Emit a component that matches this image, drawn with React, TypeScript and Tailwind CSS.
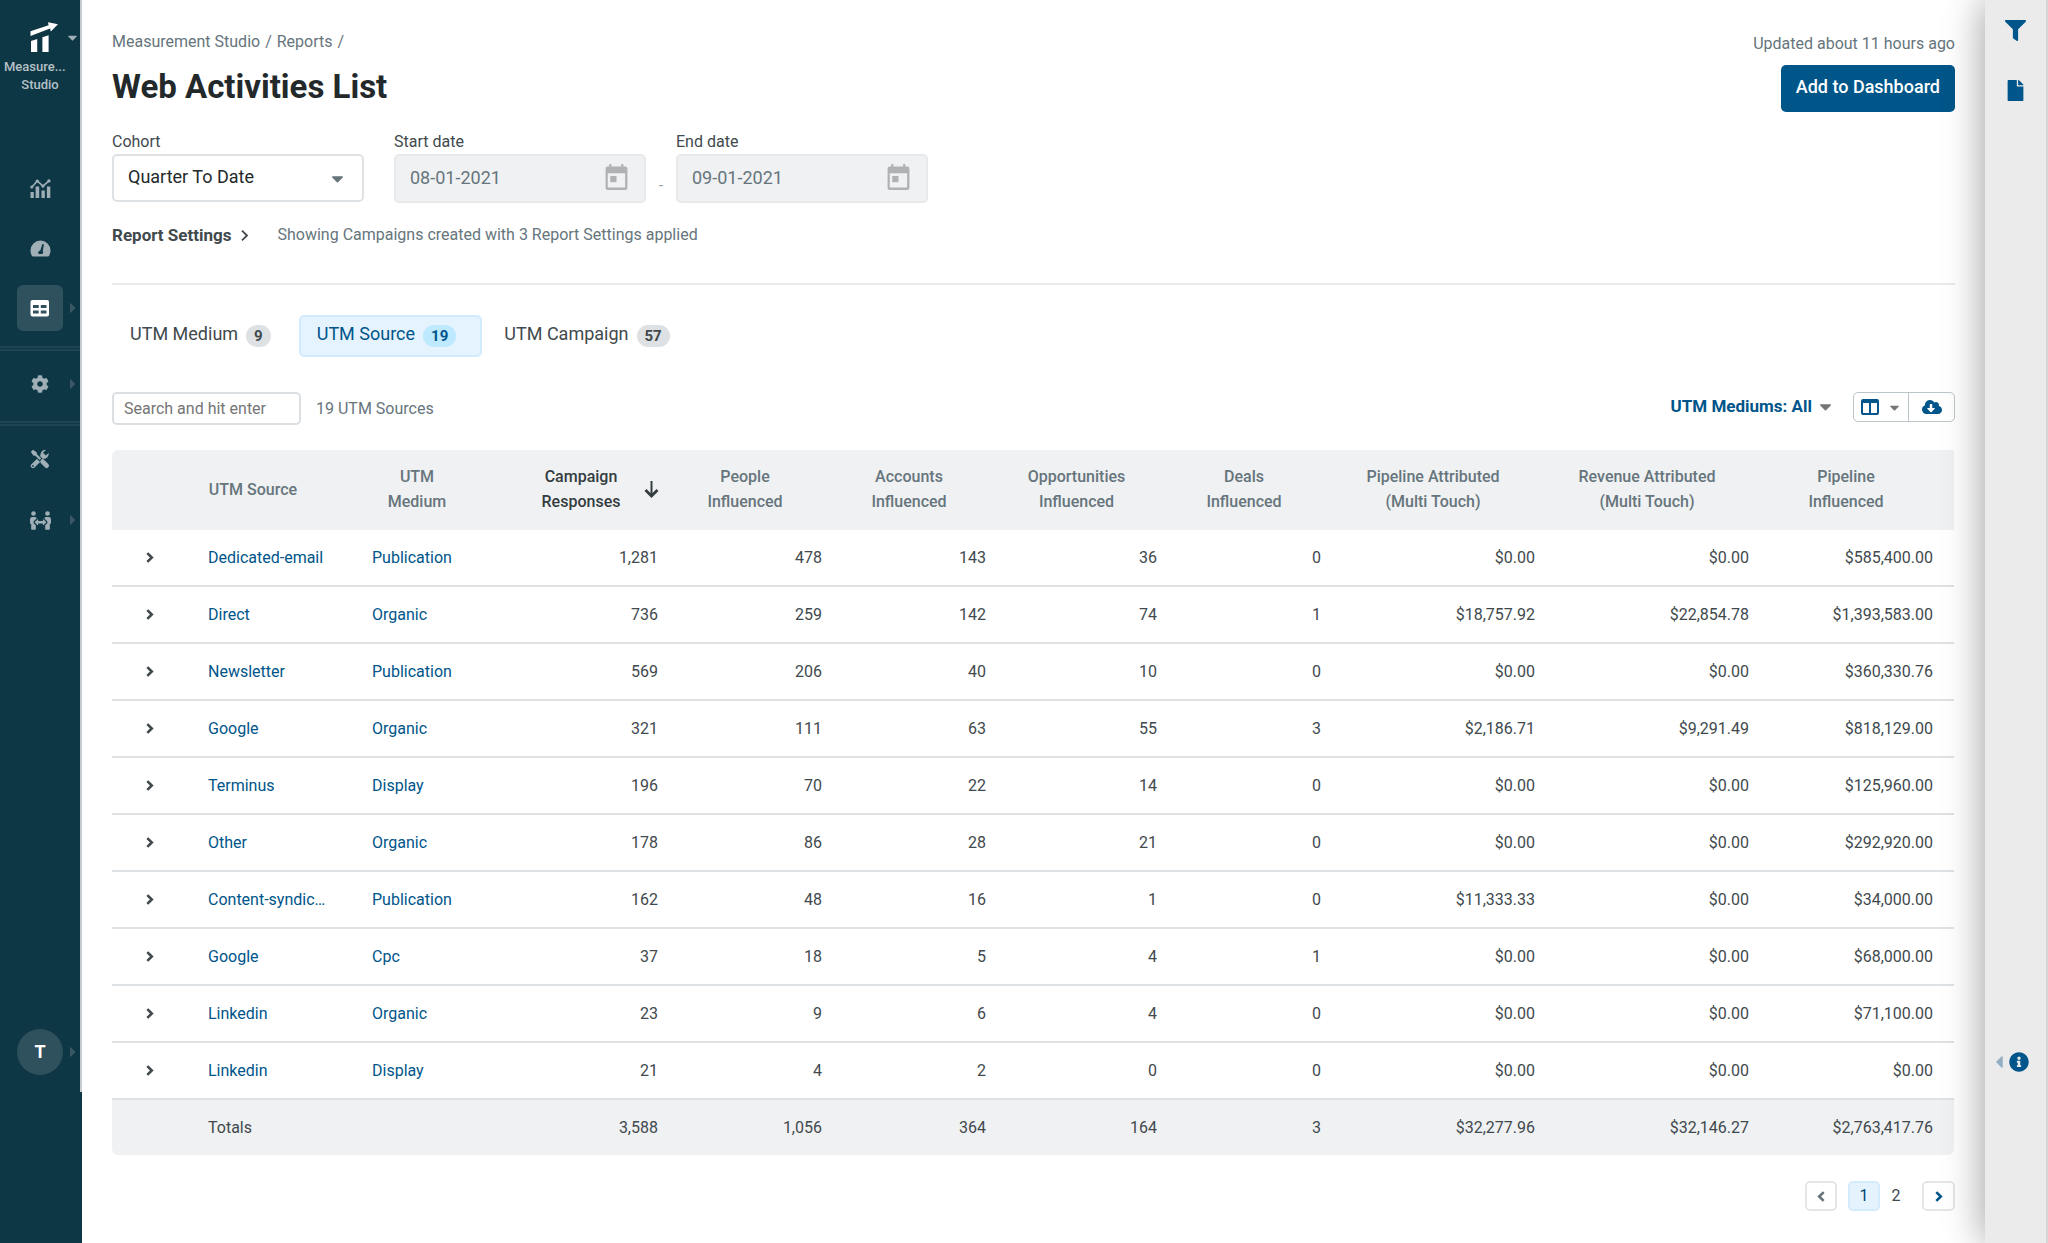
import type { ReactNode } from "react";
import { FaCaretDown, FaCaretLeft, FaCaretRight, FaCloudDownloadAlt, FaCog, FaFile, FaFilter, FaInfoCircle, FaPeopleArrows } from "react-icons/fa";

const COLUMNS = [
  { label: ["UTM Source"], width: "w-[164px]" },
  { label: ["UTM", "Medium"], width: "w-[164px]" },
  { label: ["Campaign", "Responses"], width: "w-[164px]", sorted: true },
  { label: ["People", "Influenced"], width: "w-[164px]" },
  { label: ["Accounts", "Influenced"], width: "w-[164px]" },
  { label: ["Opportunities", "Influenced"], width: "w-[171px]" },
  { label: ["Deals", "Influenced"], width: "w-[164px]" },
  { label: ["Pipeline Attributed", "(Multi Touch)"], width: "w-[214px]" },
  { label: ["Revenue Attributed", "(Multi Touch)"], width: "w-[214px]" },
  { label: ["Pipeline", "Influenced"], width: "w-[184px]" },
];

const ROWS = [
  ["Dedicated-email", "Publication", "1,281", "478", "143", "36", "0", "$0.00", "$0.00", "$585,400.00"],
  ["Direct", "Organic", "736", "259", "142", "74", "1", "$18,757.92", "$22,854.78", "$1,393,583.00"],
  ["Newsletter", "Publication", "569", "206", "40", "10", "0", "$0.00", "$0.00", "$360,330.76"],
  ["Google", "Organic", "321", "111", "63", "55", "3", "$2,186.71", "$9,291.49", "$818,129.00"],
  ["Terminus", "Display", "196", "70", "22", "14", "0", "$0.00", "$0.00", "$125,960.00"],
  ["Other", "Organic", "178", "86", "28", "21", "0", "$0.00", "$0.00", "$292,920.00"],
  ["Content-syndic…", "Publication", "162", "48", "16", "1", "0", "$11,333.33", "$0.00", "$34,000.00"],
  ["Google", "Cpc", "37", "18", "5", "4", "1", "$0.00", "$0.00", "$68,000.00"],
  ["Linkedin", "Organic", "23", "9", "6", "4", "0", "$0.00", "$0.00", "$71,100.00"],
  ["Linkedin", "Display", "21", "4", "2", "0", "0", "$0.00", "$0.00", "$0.00"],
];

const TOTALS = ["3,588", "1,056", "364", "164", "3", "$32,277.96", "$32,146.27", "$2,763,417.76"];

function Logo() {
  return (
    <svg width="28" height="30" viewBox="0 0 28 30" fill="#fff" className="ml-2" aria-hidden="true">
      <path d="M.5 9.2 18.6 3.3 18 .2 28 2.3 20.8 9.4l-.7-2.8L.5 14z" />
      <path d="M1 19.1 7.2 17v13H1zM12.4 15.3l6.2-2.1V30h-6.2z" />
    </svg>
  );
}

function TrendIcon() {
  return (
    <svg width="21" height="19" viewBox="0 0 21 19" fill="currentColor" aria-hidden="true">
      <path d="M.5 13h3.3v6H.5zM5.6 7.6h3.6V19H5.6zM11.5 11.6h3.3V19h-3.3zM16.9 7.6h3.4V19h-3.4z" />
      <path d="M1.7 8.2 7.3 2l5.6 5.2L19 1.8" fill="none" stroke="currentColor" strokeWidth="1.6" />
      <circle cx="1.8" cy="8" r="1.6" />
      <circle cx="7.3" cy="2.1" r="1.7" />
      <circle cx="13" cy="7.1" r="1.6" />
      <circle cx="18.9" cy="1.9" r="1.7" />
    </svg>
  );
}

function GaugeIcon() {
  return (
    <svg width="21" height="17" viewBox="0 0 21 17" aria-hidden="true">
      <path d="M10.5.5a10 10 0 0 0-10 10c0 2 .5 3.8 1.4 5.3.2.4.6.7 1.1.7h15c.5 0 .9-.3 1.1-.7a10 10 0 0 0 1.4-5.3 10 10 0 0 0-10-10z" fill="currentColor" />
      <path d="M12.4 3.9 13.9 4.3 12.8 11a2.3 2.3 0 0 1-.4 3H8.6a2.3 2.3 0 0 1 1.7-3.6z" fill="#0e3746" />
    </svg>
  );
}

function TableIcon() {
  return (
    <svg width="20" height="17" viewBox="0 0 20 17" aria-hidden="true">
      <rect x=".5" width="18.5" height="16.5" rx="2" fill="#fff" />
      <path d="M3 5h5.7v3H3zM10.8 5h5.7v3h-5.7zM3 10.4h5.7v3H3zM10.8 10.4h5.7v3h-5.7z" fill="#2f505d" />
    </svg>
  );
}

function ToolsIcon() {
  return (
    <svg width="20" height="20" viewBox="0 0 20 20" aria-hidden="true">
      <path d="M3 16.9 13.2 6.9" stroke="currentColor" strokeWidth="4.4" strokeLinecap="round" />
      <path d="M15.9.9a5 5 0 0 0-5.2 6.6l2.6 2.3a5 5 0 0 0 5.4-5.7l-2.9 2.3-2.2-.6-.4-2.2z" fill="currentColor" />
      <path d="m3 3 13 13" stroke="#0e3746" strokeWidth="4" />
      <path d="M.8 2.7 2.9.8l3.7 2.5.4 2 4.2 4.1-1.6 1.5-4.3-4.1-2-.4z" fill="currentColor" />
      <path d="m12.6 12.6 4 4" stroke="currentColor" strokeWidth="4.8" strokeLinecap="round" />
      <circle cx="3" cy="16.9" r=".9" fill="#0e3746" />
    </svg>
  );
}

function CalendarIcon() {
  return (
    <svg width="23" height="26" viewBox="0 0 22 25" className="absolute top-[10px] right-[18px] text-[#b0b1b2]" fill="currentColor" aria-hidden="true">
      <path fillRule="evenodd" d="M4 0h2v2.5h9.5V0h2v2.5h2a2 2 0 0 1 2 2V23a2 2 0 0 1-2 2h-17a2 2 0 0 1-2-2V4.5a2 2 0 0 1 2-2H4zM2.6 9v13.6h16.7V9z" />
      <path d="M5 11.5h6v6H5z" />
    </svg>
  );
}

function Chevron({ flip = false, thin = false }: { flip?: boolean; thin?: boolean }) {
  return (
    <svg width="8" height="11" viewBox="0 0 8 11" className={flip ? "rotate-180" : ""} fill="none" stroke="currentColor" strokeWidth={thin ? 1.8 : 2.6} aria-hidden="true">
      <path d={thin ? "m1 .7 5 4.8-5 4.8" : "m1.3 1.1 4.5 4.4-4.5 4.4"} />
    </svg>
  );
}

function NavItem({ label, active = false, arrow = false, children }: { label: string; active?: boolean; arrow?: boolean; children: ReactNode }) {
  return (
    <a
      href="#"
      aria-label={label}
      className={`relative mx-auto flex size-[46px] items-center justify-center rounded-md ${active ? "bg-[#2f505d] text-white" : "text-[#9fafb5]"}`}
    >
      {children}
      {arrow && <FaCaretRight className="absolute -right-[18px] text-[16px] text-[#385763]" />}
    </a>
  );
}

function Divider() {
  return <div className="h-[5px] border-y-2 border-[#1d4552]" />;
}

function Sidebar() {
  return (
    <aside className="w-[82px] shrink-0 bg-[#0e3746]">
      <div className="flex h-[1092px] flex-col border-r-2 border-[#c5cbce]">
        <button className="relative mt-[22px] flex flex-col items-center text-[13px] leading-[18px] font-medium text-[#b4c1c6]">
          <Logo />
          <FaCaretDown className="absolute top-2 right-0 text-[15px] text-[#9fafb5]" />
          <span className="mt-[6px] w-full truncate px-1 text-left">Measure...</span>
          <span>Studio</span>
        </button>
        <nav className="mt-[71px] flex flex-col">
          <NavItem label="Trends"><TrendIcon /></NavItem>
          <div className="mt-[14px]"><NavItem label="Scorecards"><GaugeIcon /></NavItem></div>
          <div className="mt-[14px] mb-[15px]"><NavItem label="Reports" active arrow><TableIcon /></NavItem></div>
          <Divider />
          <div className="mt-[10px] mb-[14px]"><NavItem label="Settings" arrow><FaCog className="text-[18px]" /></NavItem></div>
          <Divider />
          <div className="mt-[10px]"><NavItem label="Tools"><ToolsIcon /></NavItem></div>
          <div className="mt-[15px]"><NavItem label="Partners" arrow><FaPeopleArrows className="text-[21px]" /></NavItem></div>
        </nav>
        <button className="relative mx-auto mt-auto mb-[17px] flex size-[46px] items-center justify-center rounded-full bg-[#2f505d] text-lg font-bold text-white">
          T
          <FaCaretRight className="absolute -right-[18px] text-[16px] text-[#385763]" />
        </button>
      </div>
    </aside>
  );
}

function DateField({ id, label, value }: { id: string; label: string; value: string }) {
  return (
    <div className="w-[252px]">
      <label htmlFor={id} className="block leading-6 text-[#41494d]">{label}</label>
      <div className="relative">
        <input id={id} disabled defaultValue={value} className="h-[49px] w-full rounded-[5px] border-2 border-[#e7e9eb] bg-[#f0f1f3] px-[14px] pb-[2px] text-lg text-[#66757c]" />
        <CalendarIcon />
      </div>
    </div>
  );
}

function Tab({ label, count, active = false }: { label: string; count: number; active?: boolean }) {
  return (
    <button
      className={`flex h-[42px] items-center gap-2 rounded-[5px] border-2 px-4 text-lg ${active ? "border-[#d2ecfd] bg-[#e5f3fe] pr-6 text-[#00558a]" : "border-transparent text-[#41494d]"}`}
    >
      <span className="pb-1">{label}</span>
      <span className={`rounded-full px-2 text-[15px] leading-[22px] font-bold ${active ? "bg-[#bfe9ff]" : "bg-[#dee1e4]"}`}>{count}</span>
    </button>
  );
}

function ReportTable() {
  return (
    <table className="w-full table-fixed border-separate border-spacing-0 text-[#41494d]">
      <thead className="bg-[#f0f1f3] text-[#66757c]">
        <tr className="h-20">
          <th className="w-[75px] rounded-tl-md" aria-label="Expand" />
          {COLUMNS.map((c) => (
            <th key={c.label.join(" ")} className={`relative pr-8 pb-[2px] leading-[25px] font-medium ${c.width} ${c.sorted ? "text-[#343c40]" : ""}`}>
              {c.label.map((line) => (
                <span key={line} className="block">{line}</span>
              ))}
              {c.sorted && (
                <svg width="15" height="18" viewBox="0 0 15 18" className="absolute top-[31px] right-5" fill="none" stroke="currentColor" aria-hidden="true">
                  <path d="M7.5 0v15" strokeWidth="2" />
                  <path d="m1.5 9 6 6 6-6" strokeWidth="2.8" />
                </svg>
              )}
            </th>
          ))}
        </tr>
      </thead>
      <tbody>
        {ROWS.map(([source, medium, ...values], i) => (
          <tr key={i} className="h-[57px]">
            <td className="border-b-2 border-[#dfe2e5]">
              <button aria-label={`Expand ${source}`} className="mx-auto flex p-2">
                <Chevron />
              </button>
            </td>
            <td className="truncate border-b-2 border-[#dfe2e5] pl-[21px] text-[#00558a]"><a href="#">{source}</a></td>
            <td className="border-b-2 border-[#dfe2e5] pl-[21px] text-[#00558a]"><a href="#">{medium}</a></td>
            {values.map((v, j) => (
              <td key={j} className="border-b-2 border-[#dfe2e5] pr-[21px] text-right">{v}</td>
            ))}
          </tr>
        ))}
      </tbody>
      <tfoot className="bg-[#f0f1f3]">
        <tr className="h-[55px]">
          <td className="rounded-bl-md" />
          <td className="pl-[21px]">Totals</td>
          <td />
          {TOTALS.map((v, i) => (
            <td key={i} className="pr-[21px] text-right last:rounded-br-md">{v}</td>
          ))}
        </tr>
      </tfoot>
    </table>
  );
}

export default function App() {
  return (
    <div className="flex min-h-screen bg-white font-['Roboto',sans-serif] text-base leading-6">
      <Sidebar />
      <main className="min-w-0 flex-1 px-[30px] pt-[30px]">
        <header className="flex items-start justify-between">
          <div>
            <nav aria-label="Breadcrumb" className="flex gap-[5px] text-[#66757c]">
              <a href="#">Measurement Studio</a>
              <span>/</span>
              <a href="#">Reports</a>
              <span>/</span>
            </nav>
            <h1 className="mt-[13px] text-[33px] leading-10 font-bold text-[#23292b]">Web Activities List</h1>
          </div>
          <div className="flex flex-col items-end pt-[2px]">
            <p className="text-[#66757c]">Updated about 11 hours ago</p>
            <button className="mt-[9px] h-[47px] rounded-[5px] bg-[#005689] px-[15px] pb-1 text-lg font-medium text-white">Add to Dashboard</button>
          </div>
        </header>

        <div className="mt-[18px] flex items-start">
          <div className="w-[252px]">
            <label htmlFor="cohort" className="block leading-6 text-[#41494d]">Cohort</label>
            <div className="relative">
              <select id="cohort" className="h-12 w-full appearance-none rounded-[5px] border-2 border-[#dfe2e5] bg-white px-[14px] pb-[3px] text-lg text-[#23292b]">
                <option>Quarter To Date</option>
              </select>
              <FaCaretDown className="pointer-events-none absolute top-[15px] right-[17px] text-[19px] text-[#66757c]" />
            </div>
          </div>
          <div className="ml-[30px]"><DateField id="start" label="Start date" value="08-01-2021" /></div>
          <span className="w-[30px] pt-[44px] text-center text-[#9aa5aa]">-</span>
          <DateField id="end" label="End date" value="09-01-2021" />
        </div>

        <div className="mt-5 flex items-center border-b-2 border-[#e7eaed] pb-9">
          <button className="flex items-center gap-[10px] text-[17px] leading-6 font-bold text-[#41494d]">
            Report Settings
            <Chevron thin />
          </button>
          <p className="ml-7 text-[#66757c]">Showing Campaigns created with 3 Report Settings applied</p>
        </div>

        <div className="mt-[30px] flex">
          <Tab label="UTM Medium" count={9} />
          <div className="mr-1 ml-[10px]"><Tab label="UTM Source" count={19} active /></div>
          <Tab label="UTM Campaign" count={57} />
        </div>

        <div className="mt-[35px] flex items-center">
          <input aria-label="Search" placeholder="Search and hit enter" className="h-[33px] w-[189px] rounded-[5px] border-2 border-[#dbdfe2] px-[10px] placeholder:text-[#757575]" />
          <span className="ml-[15px] text-[#66757c]">19 UTM Sources</span>
          <div className="ml-auto flex items-center pb-[3px]">
            <button className="flex items-center gap-1 pb-[2px] text-[17px] leading-6 font-bold text-[#00558a]">
              UTM Mediums: All
              <FaCaretDown className="text-[19px] text-[#757575]" />
            </button>
            <div className="ml-[18px] flex h-[30px] rounded-[5px] border border-[#bcc5ca]">
              <button aria-label="Columns" className="flex w-[55px] items-center justify-center gap-[8px] border-r border-[#bcc5ca]">
                <svg width="18" height="16" viewBox="0 0 18 16" aria-hidden="true">
                  <path fillRule="evenodd" fill="#00558a" d="M2 0h14a2 2 0 0 1 2 2v12a2 2 0 0 1-2 2H2a2 2 0 0 1-2-2V2a2 2 0 0 1 2-2zm0 4v10h6V4zm8 0v10h6V4z" />
                </svg>
                <FaCaretDown className="text-[15px] text-[#757575]" />
              </button>
              <button aria-label="Download" className="flex w-[45px] items-center justify-center text-[#00558a]">
                <FaCloudDownloadAlt className="text-[20px]" />
              </button>
            </div>
          </div>
        </div>

        <div className="mt-[25px] pr-px"><ReportTable /></div>

        <nav aria-label="Pagination" className="mt-[26px] flex items-center justify-end pb-[30px] leading-[30px]">
          <button aria-label="Previous page" className="mr-[11px] flex h-[30px] w-8 items-center justify-center rounded-[5px] border-2 border-[#e4e7ea] text-[#66757c]"><Chevron flip /></button>
          <button className="flex h-[30px] w-8 items-center justify-center rounded-[5px] border-2 border-[#d2ecfd] bg-[#e5f3fe] text-[#00446e]">1</button>
          <button className="w-8 text-[#41494d]">2</button>
          <button aria-label="Next page" className="ml-[10px] flex h-[30px] w-[33px] items-center justify-center rounded-[5px] border-2 border-[#e4e7ea] text-[#00558a]"><Chevron /></button>
        </nav>
      </main>
      <aside className="relative flex w-[63px] shrink-0 flex-col items-center border-r-2 border-[#d5d5d7] bg-[#ebebeb] text-[#00558a] shadow-[0_0_40px_rgba(0,0,0,0.4)]">
        <button aria-label="Filters" className="mt-5"><FaFilter className="text-[21px]" /></button>
        <button aria-label="Notes" className="mt-[39px]"><FaFile className="text-[21px]" /></button>
        <button aria-label="Information" className="mt-[951px] mr-[14px] flex items-center">
          <FaCaretLeft className="text-[20px] text-[#94aec5]" />
          <FaInfoCircle className="text-[20px]" />
        </button>
      </aside>
    </div>
  );
}
